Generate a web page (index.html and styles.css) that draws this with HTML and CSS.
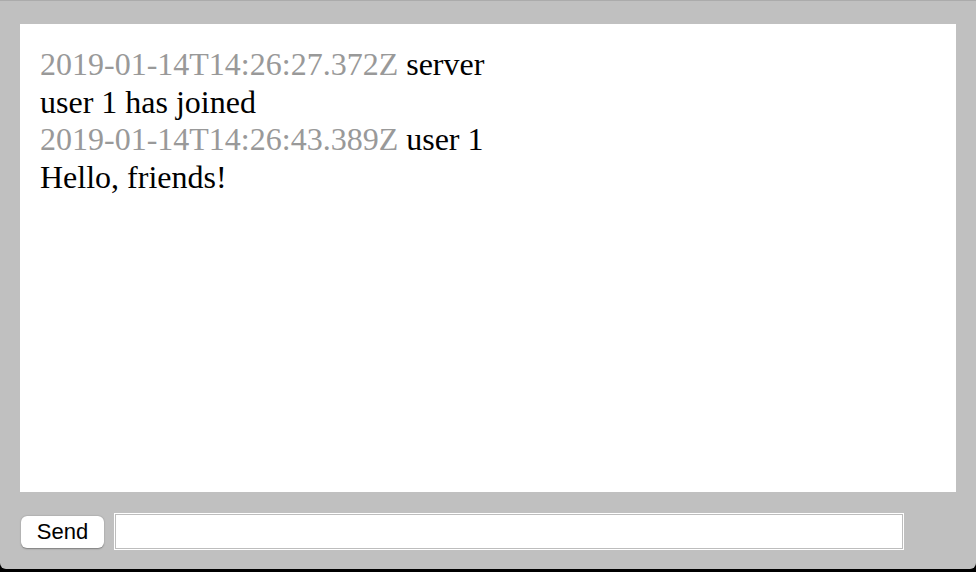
FILE: index.html
```html
<!DOCTYPE html>
<html>
<head>
<meta charset="utf-8">
<link rel="stylesheet" href="styles.css">
</head>
<body>
<div class="window">
  <div class="log">
    <div class="msg"><span class="ts">2019-01-14T14:26:27.372Z</span> <span class="who">server</span></div>
    <div class="msg">user 1 has joined</div>
    <div class="msg"><span class="ts">2019-01-14T14:26:43.389Z</span> <span class="who">user 1</span></div>
    <div class="msg">Hello, friends!</div>
  </div>
  <div class="bar">
    <button class="send">Send</button>
    <input class="entry" type="text">
  </div>
</div>
</body>
</html>
```
FILE: styles.css
```css
html {
  background: #000;
}
body {
  margin: 0;
  height: 572px;
  overflow: hidden;
}
.window {
  box-sizing: border-box;
  height: 569px;
  background: #c0c0c0;
  border-top: 1px solid #ababab;
  border-radius: 0 0 6px 6px;
  padding: 23px 20px 0;
  display: flex;
  flex-direction: column;
}
.log {
  box-sizing: border-box;
  height: 468px;
  background: #fff;
  padding: 22px 20px 20px;
  font-family: "Liberation Serif", "Times New Roman", serif;
  font-size: 32px;
  color: #000;
}
.msg {
  line-height: 37.7px;
}
.ts {
  color: #999;
}
.bar {
  flex: 1;
  display: flex;
  align-items: center;
  gap: 10px;
  padding-left: 1px;
  padding-top: 1px;
}
.send {
  width: 83px;
  height: 32px;
  margin-top: 2px;
  background: #fff;
  border: none;
  border-radius: 6px;
  box-shadow: 0 0.5px 1.5px rgba(0,0,0,0.35);
  font-family: "Liberation Sans", Arial, sans-serif;
  font-size: 22px;
  color: #000;
  padding: 0;
}
.entry {
  box-sizing: border-box;
  width: 790px;
  height: 37px;
  background: #fff;
  border: 1px solid #fff;
  box-shadow: inset 0 0 0 1px #bdbdbd;
  margin: 0;
  padding: 0 4px;
}
```
